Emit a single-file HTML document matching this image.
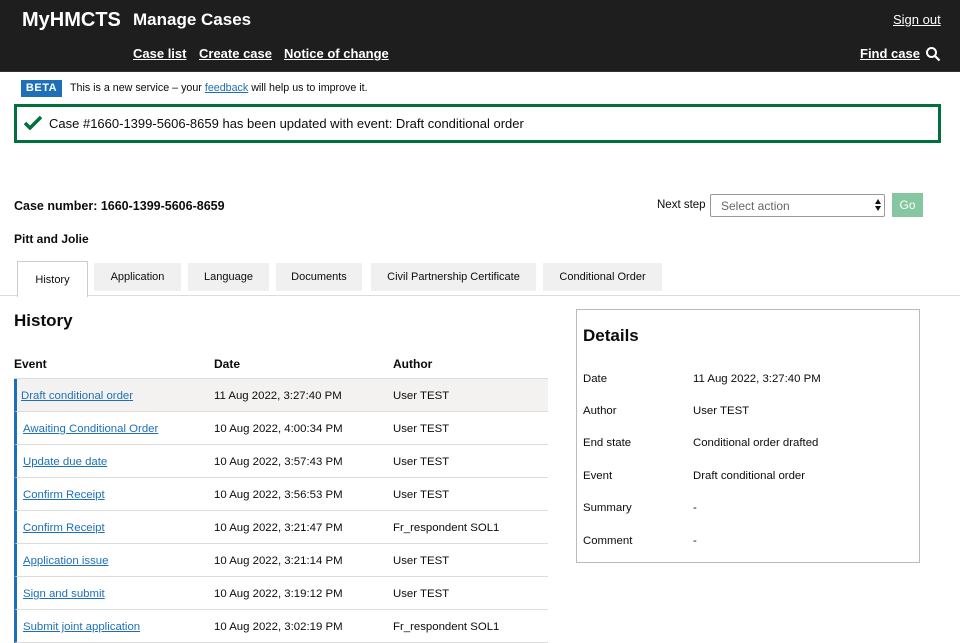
<!DOCTYPE html>
<html><head><meta charset="utf-8"><style>
*{margin:0;padding:0;box-sizing:border-box}
body{width:960px;height:640px;overflow:hidden;background:#fff;font-family:"Liberation Sans",Arial,sans-serif;color:#0b0c0c;position:relative}
.a{position:absolute;white-space:nowrap}
#hdr{position:absolute;left:0;top:0;width:960px;height:72px;background:#1e1e1e;border-bottom:1px solid #333}
.w{color:#fff;font-weight:bold}
.nav{color:#fff;font-weight:bold;font-size:13px;text-decoration:underline}
.tab{position:absolute;top:263px;height:28px;background:#f0f0f0;font-size:11px;text-align:center;line-height:28px}
.row{position:absolute;left:14px;width:534px;height:33px;border-bottom:1px solid #dcdcdc;border-left:3px solid #1d70b8;font-size:11.4px}
.row span{position:absolute;top:11px}
.row .e{left:6px;color:#1d70b8;text-decoration:underline}
.row .d{left:197px}
.row .u{left:376px}
.dl{font-size:11.4px}
</style></head><body>
<div id="hdr"></div>
<div class="a w" style="left:22px;top:9px;font-size:20px">MyHMCTS</div>
<div class="a w" style="left:133px;top:10px;font-size:17px">Manage Cases</div>
<div class="a nav" style="left:133px;top:46px">Case list</div>
<div class="a nav" style="left:199px;top:46px">Create case</div>
<div class="a nav" style="left:284px;top:46px">Notice of change</div>
<div class="a" style="left:893px;top:12px;color:#fff;font-size:13px;text-decoration:underline">Sign out</div>
<div class="a nav" style="left:860px;top:46px">Find case</div>
<svg class="a" style="left:925px;top:46px" width="16" height="16" viewBox="0 0 16 16"><circle cx="6.5" cy="6.5" r="4.5" fill="none" stroke="#fff" stroke-width="2"/><line x1="10" y1="10" x2="14.5" y2="14.5" stroke="#fff" stroke-width="2.2"/></svg>

<div class="a" style="left:21px;top:80px;width:41px;height:17px;background:#1d70b8;color:#fff;font-weight:bold;font-size:11px;text-align:center;line-height:17px;letter-spacing:.5px">BETA</div>
<div class="a" style="left:70px;top:82px;font-size:10.7px">This is a new service – your <span style="color:#1d70b8;text-decoration:underline">feedback</span> will help us to improve it.</div>

<div class="a" style="left:14px;top:104px;width:927px;height:39px;border:3px solid #00703c"></div>
<svg class="a" style="left:24px;top:115px" width="18" height="15" viewBox="0 0 18 15"><path d="M1 8 L6 13 L17 2" fill="none" stroke="#00703c" stroke-width="3.5"/></svg>
<div class="a" style="left:49px;top:116px;font-size:13px">Case #1660-1399-5606-8659 has been updated with event: Draft conditional order</div>

<div class="a" style="left:14px;top:199px;font-size:12.5px;font-weight:bold">Case number: 1660-1399-5606-8659</div>
<div class="a" style="left:657px;top:199px;font-size:11.5px">Next step</div>
<div class="a" style="left:710px;top:194px;width:175px;height:23px;border:1px solid #999;border-radius:2px;font-size:12px;color:#666;padding:4px 10px;line-height:14px">Select action</div>
<svg class="a" style="left:874px;top:198px" width="8" height="14" viewBox="0 0 8 14"><path d="M4 1 L7 6 H1Z M4 13 L7 8 H1Z" fill="#111"/></svg>
<div class="a" style="left:892px;top:193px;width:31px;height:24px;background:#85c7a0;color:#fff;font-size:12px;text-align:center;line-height:24px">Go</div>

<div class="a" style="left:14px;top:232px;font-size:12px;font-weight:bold">Pitt and Jolie</div>

<div class="a" style="left:0;top:295px;width:960px;height:1px;background:#dcdcdc"></div>
<div class="a" style="left:17px;top:261px;width:71px;height:36px;background:#fff;border:1px solid #ccc;border-bottom:none;font-size:11px;text-align:center;line-height:36px">History</div>
<div class="tab" style="left:94px;width:87px">Application</div>
<div class="tab" style="left:188px;width:81px">Language</div>
<div class="tab" style="left:276px;width:86px">Documents</div>
<div class="tab" style="left:371px;width:165px">Civil Partnership Certificate</div>
<div class="tab" style="left:543px;width:119px">Conditional Order</div>

<div class="a" style="left:14px;top:311px;font-size:17px;font-weight:bold">History</div>
<div class="a" style="left:14px;top:357px;font-size:12px;font-weight:bold">Event</div>
<div class="a" style="left:214px;top:357px;font-size:12px;font-weight:bold">Date</div>
<div class="a" style="left:393px;top:357px;font-size:12px;font-weight:bold">Author</div>
<div class="a" style="left:14px;top:378px;width:534px;height:1px;background:#dcdcdc"></div>

<div class="row" style="top:379px;background:#f3f2f1"><span class="e" style="left:4px">Draft conditional order</span><span class="d">11 Aug 2022, 3:27:40 PM</span><span class="u">User TEST</span></div>
<div class="row" style="top:412px"><span class="e">Awaiting Conditional Order</span><span class="d">10 Aug 2022, 4:00:34 PM</span><span class="u">User TEST</span></div>
<div class="row" style="top:445px"><span class="e">Update due date</span><span class="d">10 Aug 2022, 3:57:43 PM</span><span class="u">User TEST</span></div>
<div class="row" style="top:478px"><span class="e">Confirm Receipt</span><span class="d">10 Aug 2022, 3:56:53 PM</span><span class="u">User TEST</span></div>
<div class="row" style="top:511px"><span class="e">Confirm Receipt</span><span class="d">10 Aug 2022, 3:21:47 PM</span><span class="u">Fr_respondent SOL1</span></div>
<div class="row" style="top:544px"><span class="e">Application issue</span><span class="d">10 Aug 2022, 3:21:14 PM</span><span class="u">User TEST</span></div>
<div class="row" style="top:577px"><span class="e">Sign and submit</span><span class="d">10 Aug 2022, 3:19:12 PM</span><span class="u">User TEST</span></div>
<div class="row" style="top:610px"><span class="e">Submit joint application</span><span class="d">10 Aug 2022, 3:02:19 PM</span><span class="u">Fr_respondent SOL1</span></div>

<div class="a" style="left:576px;top:309px;width:344px;height:254px;border:1px solid #bbb"></div>
<div class="a" style="left:583px;top:326px;font-size:17px;font-weight:bold">Details</div>
<div class="a dl" style="left:583px;top:373px">Date</div><div class="a dl" style="left:693px;top:373px">11 Aug 2022, 3:27:40 PM</div>
<div class="a dl" style="left:583px;top:405px">Author</div><div class="a dl" style="left:693px;top:405px">User TEST</div>
<div class="a dl" style="left:583px;top:437px">End state</div><div class="a dl" style="left:693px;top:437px">Conditional order drafted</div>
<div class="a dl" style="left:583px;top:470px">Event</div><div class="a dl" style="left:693px;top:470px">Draft conditional order</div>
<div class="a dl" style="left:583px;top:502px">Summary</div><div class="a dl" style="left:693px;top:502px">-</div>
<div class="a dl" style="left:583px;top:535px">Comment</div><div class="a dl" style="left:693px;top:535px">-</div>
</body></html>
